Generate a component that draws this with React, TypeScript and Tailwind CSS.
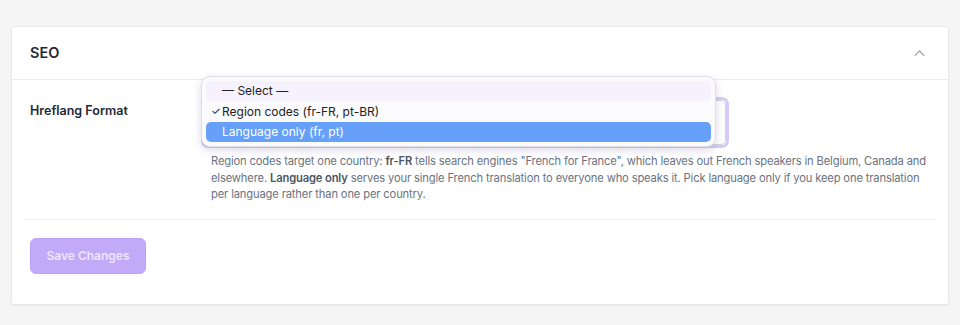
import React from 'react';

function ChevronUp() {
  return (
    <svg width="15" height="15" viewBox="0 0 24 24" fill="none" stroke="currentColor" strokeWidth="2" strokeLinecap="round" strokeLinejoin="round">
      <path d="M5 15l7-7 7 7" />
    </svg>
  );
}

export default function App() {
  return (
    <div className="min-h-[325px] bg-[#f5f5f5] px-[11px] pt-[26px] pb-[20px] font-['Inter',sans-serif] text-[#1f2937]">
      <div className="rounded-[3px] border border-[#e8e8e8] bg-white shadow-[0_1px_2px_rgba(0,0,0,0.06)]">
        <div className="flex h-[53px] items-center justify-between border-b border-[#ececec] pl-[18px] pr-[21px]">
          <h2 className="text-[14.5px] font-semibold text-[#1f2937]">SEO</h2>
          <span className="text-[#9ca3af]">
            <ChevronUp />
          </span>
        </div>

        <div className="px-[13px]">
          <div className="flex border-b border-[#f0f0f0] pt-[17px] pb-[16px]">
            <div className="w-[176px] shrink-0 pl-[5px] pt-[5px] text-[12.5px] font-semibold text-[#1f2937]">
              Hreflang Format
            </div>
            <div className="flex-1 pr-[6px]">
              <div className="relative w-[528px]">
                <div className="h-[51px] rounded-[7px] border-[3px] border-[#d9c9fb] bg-white">
                  <div className="h-full rounded-[5px] border border-[#d4d4d8]" />
                </div>
                <div className="absolute left-0 top-[-21px] z-10 w-[515px] rounded-[9px] border border-[#e0dfe6] bg-[#fbfbfd] p-[4px] shadow-[0_3px_8px_rgba(60,40,120,0.18)]">
                  <div className="flex h-[20px] items-center rounded-[5px] bg-[#f5f2fd] pl-[16px] text-[12px] text-[#222]">
                    — Select —
                  </div>
                  <div className="flex h-[21px] items-center pl-[5px] text-[12px] text-[#222]">
                    <span className="w-[11px] text-[11px]">✓</span>
                    Region codes (fr-FR, pt-BR)
                  </div>
                  <div className="flex h-[20px] items-center rounded-[5px] bg-[#67a0f8] pl-[16px] text-[12px] text-white">
                    Language only (fr, pt)
                  </div>
                </div>
              </div>
              <p className="mt-[5px] pl-[10px] text-[11.2px] leading-[16.5px] tracking-[-0.15px] text-[#6b7280]">
                Region codes target one country: <strong className="font-semibold text-[#4b5563]">fr-FR</strong> tells search engines "French for France", which leaves out French speakers in Belgium, Canada and elsewhere. <strong className="font-semibold text-[#4b5563]">Language only</strong> serves your single French translation to everyone who speaks it. Pick language only if you keep one translation per language rather than one per country.
              </p>
            </div>
          </div>

          <div className="pt-[18px] pb-[30px] pl-[5px]">
            <button
              disabled
              className="h-[36px] w-[116px] rounded-[6px] border border-[#b9a4f5] bg-[#c2aaf8] text-[12px] font-semibold text-[#ece5fd]"
            >
              Save Changes
            </button>
          </div>
        </div>
      </div>
    </div>
  );
}
